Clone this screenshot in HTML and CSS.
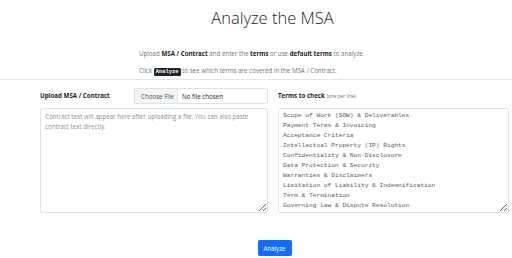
FILE: index.html
```html
<!DOCTYPE html>
<html lang="en">
<head>
    <meta charset="UTF-8">
    <meta name="viewport" content="width=device-width, initial-scale=1.0">
    <title>Analyze the MSA</title>
    <link rel="stylesheet" href="styles.css">
</head>
<body>
    <div class="header">
        <h1>Analyze the MSA</h1>
        <div class="intro">
            <p>Upload <b>MSA / Contract</b> and enter the <b>terms</b> or use <b>default terms</b> to analyze.</p>
            <p>Click <code>Analyze</code> to see which terms are covered in the MSA / Contract.</p>
        </div>
    </div>

    <hr class="divider">

    <div class="container">
        <div class="columns">
            <div class="col col-left">
                <div class="field-head">
                    <label class="label" for="file">Upload MSA / Contract</label>
                    <input class="file-input" type="file" id="file">
                </div>
                <textarea class="box" placeholder="Contract text will appear here after uploading a file. You can also paste contract text directly."></textarea>
            </div>

            <div class="col col-right">
                <div class="field-head">
                    <label class="label" for="terms">Terms to check <small>(one per line)</small></label>
                </div>
                <textarea class="box mono" id="terms">Scope of Work (SOW) &amp; Deliverables
Payment Terms &amp; Invoicing
Acceptance Criteria
Intellectual Property (IP) Rights
Confidentiality &amp; Non-Disclosure
Data Protection &amp; Security
Warranties &amp; Disclaimers
Limitation of Liability &amp; Indemnification
Term &amp; Termination
Governing Law &amp; Dispute Resolution
Service Levels (SLA)
Change Management
Insurance Requirements
Subcontracting &amp; Assignment
Force Majeure
Notices</textarea>
            </div>
        </div>

        <div class="actions">
            <button class="btn" type="button">Analyze</button>
        </div>
    </div>
</body>
</html>
```

FILE: styles.css
```css
* {
    margin: 0;
    padding: 0;
    box-sizing: border-box;
}

body {
    font-family: 'Open Sans', 'Liberation Sans', sans-serif;
    background: #fff;
    color: #212529;
    font-size: 6.2px;
    line-height: 1.5;
}

.header {
    padding-top: 7px;
}

.header h1 {
    font-size: 16.5px;
    font-weight: 300;
    line-height: 22px;
    color: #212529;
    text-align: center;
    padding: 0 3px 0 36px;
}

.intro {
    width: 234px;
    margin: 20px auto 0;
}

.intro p {
    color: #6c757d;
    line-height: 9px;
    margin-bottom: 8px;
}

.intro b {
    color: #212529;
    font-weight: 700;
}

code {
    font-family: 'Liberation Mono', monospace;
    font-size: 5.4px;
    font-weight: 700;
    background: #212529;
    color: #fff;
    padding: 1px 2px;
    border-radius: 1.5px;
}

.divider {
    border: 0;
    border-top: 1px solid #e3e6e9;
    margin-top: -6px;
}

.container {
    padding: 8px 3px 0 40px;
}

.columns {
    display: flex;
    gap: 10px;
}

.col-left {
    width: 228px;
}

.col-right {
    width: 231px;
}

.field-head {
    display: flex;
    align-items: center;
    justify-content: space-between;
    height: 16px;
    margin-bottom: 4px;
}

.label {
    font-weight: 700;
    color: #212529;
}

.label small {
    font-weight: 400;
    font-size: 4.8px;
    color: #6c757d;
}

.file-input {
    width: 134px;
    height: 16px;
    border: 1px solid #dee2e6;
    border-radius: 2px;
    font-family: inherit;
    font-size: 6.2px;
    color: #212529;
    background: #fff;
}

.file-input::file-selector-button {
    height: 100%;
    width: 43px;
    margin: 0 4px 0 0;
    border: 0;
    border-right: 1px solid #dee2e6;
    background: #f4f5f6;
    color: #495057;
    font-family: inherit;
    font-size: 6.2px;
}

.box {
    display: block;
    width: 100%;
    height: 105px;
    border: 1px solid #dee2e6;
    border-radius: 2px;
    padding: 3px 4px;
    font-family: inherit;
    font-size: 6.2px;
    line-height: 10px;
    color: #212529;
    resize: vertical;
}

.box::placeholder {
    color: #8a9096;
}

.mono {
    font-family: 'Liberation Mono', 'DejaVu Sans Mono', monospace;
    font-size: 6.2px;
    color: #555b61;
    padding: 2px 4px;
    white-space: pre;
}

.mono::-webkit-scrollbar {
    width: 8px;
}

.mono::-webkit-scrollbar-track {
    background: #f1f1f1;
}

.mono::-webkit-scrollbar-thumb {
    background: #c1c1c1;
}

.mono::-webkit-scrollbar-button:single-button {
    height: 8px;
    background: #f1f1f1;
}

.actions {
    display: flex;
    justify-content: center;
    margin-top: 27px;
}

.btn {
    background: #0d6efd;
    color: #fff;
    border: 0;
    border-radius: 2px;
    font-family: inherit;
    font-size: 6.2px;
    width: 34px;
    height: 16px;
}
```
